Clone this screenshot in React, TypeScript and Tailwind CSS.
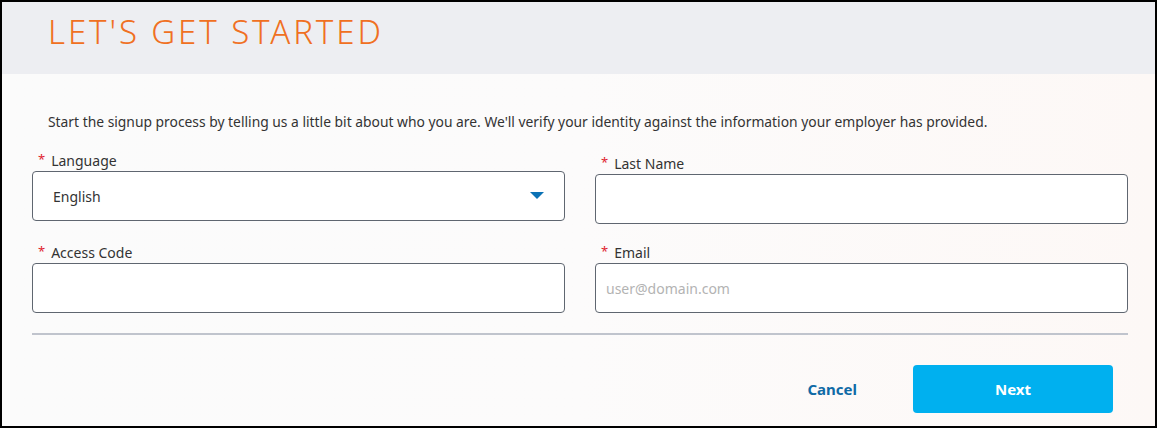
import React from 'react';

const font = { fontFamily: '"Noto Sans", "Open Sans", sans-serif' };

function Label({ text }: { text: string }) {
  return (
    <div className="flex items-center h-[20px] pl-[6px] text-[14px] text-[#333]">
      <span className="text-[#e0242f] mr-[6px] text-[13px]">*</span>
      <span>{text}</span>
    </div>
  );
}

function Field({ label, placeholder, className = '' }: { label: string; placeholder?: string; className?: string }) {
  return (
    <div className={className}>
      <Label text={label} />
      <input
        className="block w-full h-[50px] mt-[1px] bg-white border border-[#5f6670] rounded-[4px] px-[10px] text-[14px] text-[#333] placeholder:text-[#b3b3b3] outline-none"
        placeholder={placeholder}
      />
    </div>
  );
}

export default function App() {
  return (
    <div style={font} className="w-[1157px] h-[428px] border-2 border-black flex flex-col overflow-hidden">
      <header className="h-[72px] bg-[#edeef2] pl-[46px] pt-[8px] shrink-0">
        <h1 className="text-[33px] font-light tracking-[2.9px] text-[#f07022] leading-[44px]">LET'S GET STARTED</h1>
      </header>

      <div className="flex-1 bg-gradient-to-r from-[#fbfbfb] via-[#fcfbfb] to-[#fdf8f6] pl-[30px]">
        <p className="pl-[16px] pt-[38px] text-[13.85px] text-[#333] leading-[20px]">
          Start the signup process by telling us a little bit about who you are. We'll verify your identity against the information your employer has provided.
        </p>

        <div className="grid grid-cols-[533px_533px] gap-x-[30px] gap-y-[18px] mt-[18px]">
          <div>
            <Label text="Language" />
            <div className="relative h-[50px] mt-[1px] bg-white border border-[#5f6670] rounded-[4px] flex items-center px-[20px] text-[14px] text-[#333]">
              English
              <svg className="absolute right-[20px] top-[20px]" width="14" height="8" viewBox="0 0 14 8">
                <path d="M0 0 L14 0 L7 7 Z" fill="#0b72b5" />
              </svg>
            </div>
          </div>
          <Field label="Last Name" className="mt-[3px]" />
          <Field label="Access Code" />
          <Field label="Email" placeholder="user@domain.com" />
        </div>

        <div className="w-[1096px] h-[2px] bg-[#c0c4cd] mt-[20px]" />

        <div className="w-[1081px] flex justify-end items-center mt-[30px]">
          <button className="text-[15px] font-bold text-[#0f6aa6] mr-[56px]">Cancel</button>
          <button className="w-[200px] h-[48px] rounded-[4px] bg-[#00b0ef] text-white text-[15px] font-bold">Next</button>
        </div>
      </div>
    </div>
  );
}
